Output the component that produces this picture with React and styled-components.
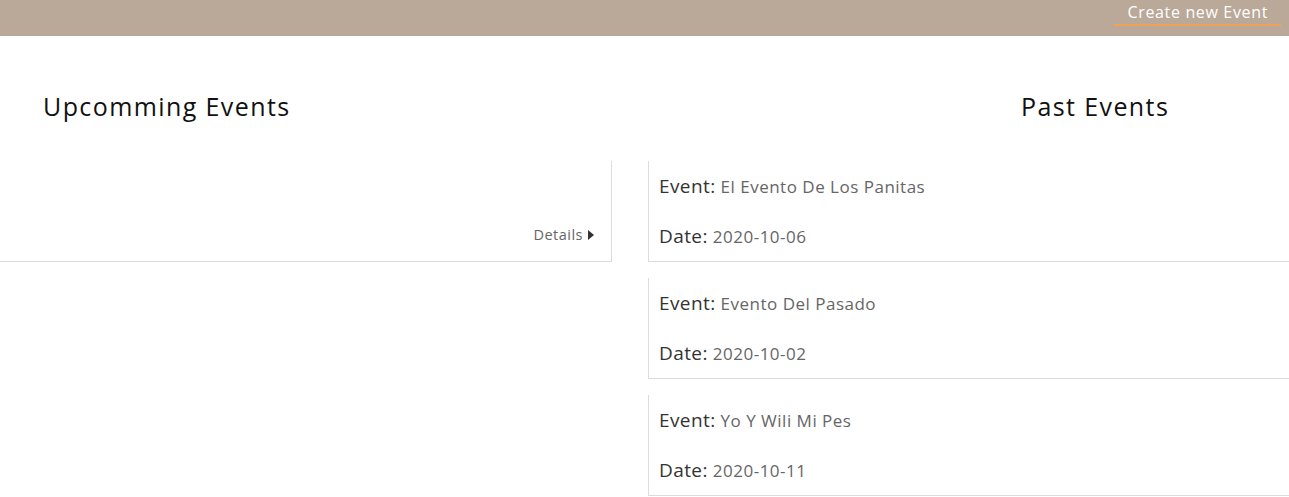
import React from "react";
import styled, { createGlobalStyle } from "styled-components";

const Global = createGlobalStyle`
  html, body { margin: 0; padding: 0; background: #fff; }
  body { font-family: "Open Sans", "Noto Sans", sans-serif; overflow: hidden; }
  * { box-sizing: border-box; }
`;

const Navbar = styled.nav`
  height: 36px;
  background: #baa899;
  display: flex;
  justify-content: flex-end;
  align-items: flex-start;
  padding-right: 8px;
`;

const NavLink = styled.a`
  display: block;
  color: #fff;
  font-size: 16px;
  letter-spacing: 0.65px;
  line-height: 24px;
  padding: 0 13px 0 14px;
  border-bottom: 2px solid #f0a25a;
  text-decoration: none;
  cursor: pointer;
`;

const Main = styled.main`
  display: grid;
  grid-template-columns: 612px 1fr;
  column-gap: 36px;
  padding-top: 52px;
`;

const Column = styled.section`
  display: flex;
  flex-direction: column;
  gap: 16px;
`;

const Title = styled.h2`
  margin: 0 0 21px;
  font-size: 25px;
  letter-spacing: 1.4px;
  font-weight: 400;
  line-height: 36px;
  color: #111;
  padding-left: ${(p) => p.$pl || 0}px;
`;

const UpcomingCard = styled.div`
  height: 101px;
  border-right: 1px solid #dcdcdc;
  border-bottom: 1px solid #dcdcdc;
  display: flex;
  align-items: flex-end;
  justify-content: flex-end;
  padding: 0 17px 17px 0;
`;

const DetailsLink = styled.a`
  display: flex;
  align-items: center;
  gap: 5px;
  font-size: 14.5px;
  letter-spacing: 0.5px;
  color: #666;
  cursor: pointer;
`;

const PastCard = styled.div`
  height: 101px;
  border-left: 1px solid #dcdcdc;
  border-bottom: 1px solid #dcdcdc;
  padding: 0 0 0 10px;
`;

const Line = styled.div`
  height: 50px;
  display: flex;
  align-items: center;
  gap: 5px;
`;

const Label = styled.span`
  font-size: 19px;
  letter-spacing: 0.4px;
  color: #333;
`;

const Value = styled.span`
  font-size: 17px;
  letter-spacing: 0.5px;
  color: #666;
`;

const events = [
  { name: "El Evento De Los Panitas", date: "2020-10-06" },
  { name: "Evento Del Pasado", date: "2020-10-02" },
  { name: "Yo Y Wili Mi Pes", date: "2020-10-11" },
];

export default function App() {
  return (
    <>
      <Global />
      <Navbar>
        <NavLink>Create new Event</NavLink>
      </Navbar>
      <Main>
        <Column>
          <Title $pl={43}>Upcomming Events</Title>
          <UpcomingCard>
            <DetailsLink>
              Details
              <svg width="6" height="10" viewBox="0 0 6 10">
                <path d="M0 0 L6 5 L0 10 Z" fill="#333" />
              </svg>
            </DetailsLink>
          </UpcomingCard>
        </Column>
        <Column>
          <Title $pl={373}>Past Events</Title>
          {events.map((e) => (
            <PastCard key={e.name}>
              <Line>
                <Label>Event:</Label>
                <Value>{e.name}</Value>
              </Line>
              <Line>
                <Label>Date:</Label>
                <Value>{e.date}</Value>
              </Line>
            </PastCard>
          ))}
        </Column>
      </Main>
    </>
  );
}
